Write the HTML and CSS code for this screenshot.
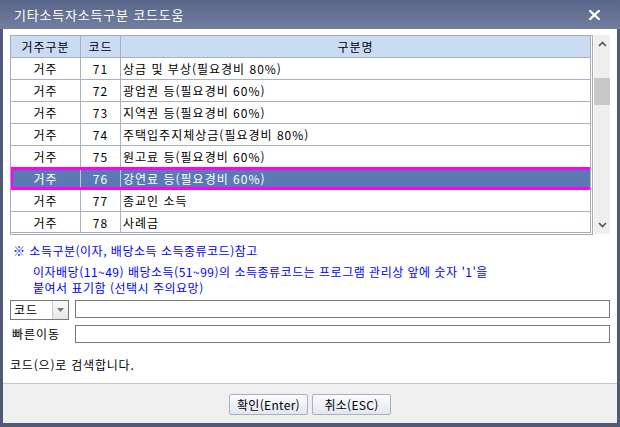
FILE: index.html
```html
<!DOCTYPE html>
<html lang="ko">
<head>
<meta charset="utf-8">
<link rel="stylesheet" href="styles.css">
</head>
<body>
<div class="window">
  <div class="titlebar">
    <span class="title">기타소득자소득구분 코드도움</span>
    <svg class="close" width="11" height="10" viewBox="0 0 11 10"><path d="M1.2 1 L9.8 9 M9.8 1 L1.2 9" stroke="#fff" stroke-width="2.3" stroke-linecap="square"/></svg>
  </div>
  <div class="content">
    <div class="gridwrap">
      <div class="table">
        <div class="row head"><div class="c1">거주구분</div><div class="c2">코드</div><div class="c3 center">구분명</div></div>
        <div class="row"><div class="c1">거주</div><div class="c2">71</div><div class="c3">상금 및 부상(필요경비 80%)</div></div>
        <div class="row"><div class="c1">거주</div><div class="c2">72</div><div class="c3">광업권 등(필요경비 60%)</div></div>
        <div class="row"><div class="c1">거주</div><div class="c2">73</div><div class="c3">지역권 등(필요경비 60%)</div></div>
        <div class="row"><div class="c1">거주</div><div class="c2">74</div><div class="c3">주택입주지체상금(필요경비 80%)</div></div>
        <div class="row"><div class="c1">거주</div><div class="c2">75</div><div class="c3">원고료 등(필요경비 60%)</div></div>
        <div class="row sel"><div class="c1">거주</div><div class="c2">76</div><div class="c3">강연료 등(필요경비 60%)</div></div>
        <div class="row"><div class="c1">거주</div><div class="c2">77</div><div class="c3">종교인 소득</div></div>
        <div class="row last"><div class="c1">거주</div><div class="c2">78</div><div class="c3">사례금</div></div>
      </div>
      <div class="scrollbar">
        <svg class="arrow" width="9" height="6" viewBox="0 0 9 6"><path d="M1 5 L4.5 1.5 L8 5" fill="none" stroke="#555" stroke-width="1.7"/></svg>
        <div class="track"><div class="thumb"></div></div>
        <svg class="arrow" width="9" height="6" viewBox="0 0 9 6"><path d="M1 1 L4.5 4.5 L8 1" fill="none" stroke="#555" stroke-width="1.7"/></svg>
      </div>
    </div>
    <div class="notes">
      <p class="n1">※ 소득구분(이자, 배당소득 소득종류코드)참고</p>
      <p class="n2">이자배당(11~49) 배당소득(51~99)의 소득종류코드는 프로그램 관리상 앞에 숫자 '1'을<br>붙여서 표기함 (선택시 주의요망)</p>
    </div>
    <div class="field">
      <div class="combo"><span class="combo-text">코드</span><span class="combo-btn"><svg width="7" height="4" viewBox="0 0 7 4"><path d="M0 0 H7 L3.5 4 Z" fill="#777"/></svg></span></div>
      <div class="input"></div>
    </div>
    <div class="field second">
      <div class="label">빠른이동</div>
      <div class="input"></div>
    </div>
    <div class="status">코드(으)로 검색합니다.</div>
  </div>
  <div class="footer">
    <button class="btn">확인(Enter)</button>
    <button class="btn">취소(ESC)</button>
  </div>
</div>
</body>
</html>
```

FILE: styles.css
```css
* { box-sizing: border-box; }
html, body { margin: 0; padding: 0; }
body {
  width: 620px;
  height: 427px;
  font-family: "Noto Sans CJK KR", "Noto Sans", sans-serif;
  font-size: 12px;
  color: #000;
  background: #4f5a78;
  overflow: hidden;
}
.window {
  width: 620px;
  height: 427px;
  display: flex;
  flex-direction: column;
  border-left: 3px solid #4f5a78;
  border-right: 3px solid #4f5a78;
  border-bottom: 4px solid #4f5a78;
}
.titlebar {
  height: 29px;
  flex: none;
  display: flex;
  align-items: center;
  justify-content: space-between;
  background: linear-gradient(#59658a, #727f9e);
  color: #fff;
  margin: 0 -3px;
  padding: 0 20px 0 14px;
}
.title { font-size: 13px; letter-spacing: 0.8px; }
.close { display: block; }
.content {
  flex: 1;
  background: #fff;
  padding: 6px 7px 0 7px;
  display: flex;
  flex-direction: column;
}
.gridwrap {
  display: flex;
  gap: 1px;
  height: 200px;
  flex: none;
}
.table {
  width: 583px;
  height: 200px;
  overflow: hidden;
  border-top: 1px solid #a3abbd;
  border-left: 1px solid #a3abbd;
  border-right: 3px double #a3abbd;
  border-bottom: 3px double #a3abbd;
  display: flex;
  flex-direction: column;
}
.row {
  display: grid;
  grid-template-columns: 70px 40px 1fr;
  height: 22px;
  flex: none;
  border-bottom: 1px solid #a9b1c1;
  line-height: 21px;
  position: relative;
  letter-spacing: 1px;
}
.row.last { border-bottom: none; height: 21px; }
.row > div { border-right: 1px solid #a9b1c1; text-align: center; white-space: nowrap; }
.row > div.c3 { border-right: none; text-align: left; padding-left: 2px; }
.row > div.c3.center { text-align: center; padding-left: 0; }
.head { background: #cadcf3; }
.sel { background: #5b7ab3; color: #fff; }
.sel > div { border-right-color: #c0c8d8; }
.sel::after {
  content: "";
  position: absolute;
  left: -1px;
  right: -3px;
  top: -1px;
  bottom: -1px;
  border: 3px solid #ff00ff;
}
.scrollbar {
  width: 16px;
  height: 199px;
  background: #efefef;
  display: flex;
  flex-direction: column;
  align-items: center;
  padding: 6px 0 6px;
}
.arrow { display: block; flex: none; }
.track { flex: 1; width: 100%; padding-top: 31px; }
.thumb { height: 27px; background: #c8c8c8; }
.notes { color: #0000ff; margin-top: 9px; letter-spacing: 0.5px; }
.notes p { margin: 0; line-height: 14px; }
.n1 { padding-left: 3px; }
.notes .n2 { padding-left: 23px; margin-top: 6px; line-height: 16px; }
.field {
  display: flex;
  align-items: flex-start;
  gap: 6px;
  margin-top: 4px;
  height: 20px;
}
.field.second { margin-top: 5px; height: 18px; }
.combo {
  width: 59px;
  height: 20px;
  flex: none;
  border: 1px solid #7a7a7a;
  display: flex;
  background: #fff;
}
.combo-text { flex: 1; padding-left: 3px; line-height: 18px; letter-spacing: 1px; }
.combo-btn {
  width: 16px;
  border-left: 1px solid #c8c8c8;
  display: flex;
  align-items: center;
  justify-content: center;
  background: linear-gradient(#fafafa, #e6e6e6);
}
.label { width: 59px; flex: none; padding-left: 2px; line-height: 18px; letter-spacing: 1px; }
.input { flex: 1; height: 18px; border: 1px solid #7a7a7a; background: #fff; }
.status { margin-top: 15px; padding-left: 0; line-height: 14px; letter-spacing: 0.8px; }
.footer {
  height: 40px;
  flex: none;
  background: #f0f0f0;
  border-top: 1px solid #c8c8c8;
  display: flex;
  justify-content: center;
  align-items: center;
  gap: 4px;
  padding-top: 1px;
}
.btn {
  font-family: inherit;
  font-size: 12px;
  width: 79px;
  height: 21px;
  padding: 0;
  border: 1px solid #a6b0c4;
  border-radius: 2px;
  background: linear-gradient(#fbfcfe, #e2e7f0);
  color: #000;
  letter-spacing: 0.3px;
}
```
